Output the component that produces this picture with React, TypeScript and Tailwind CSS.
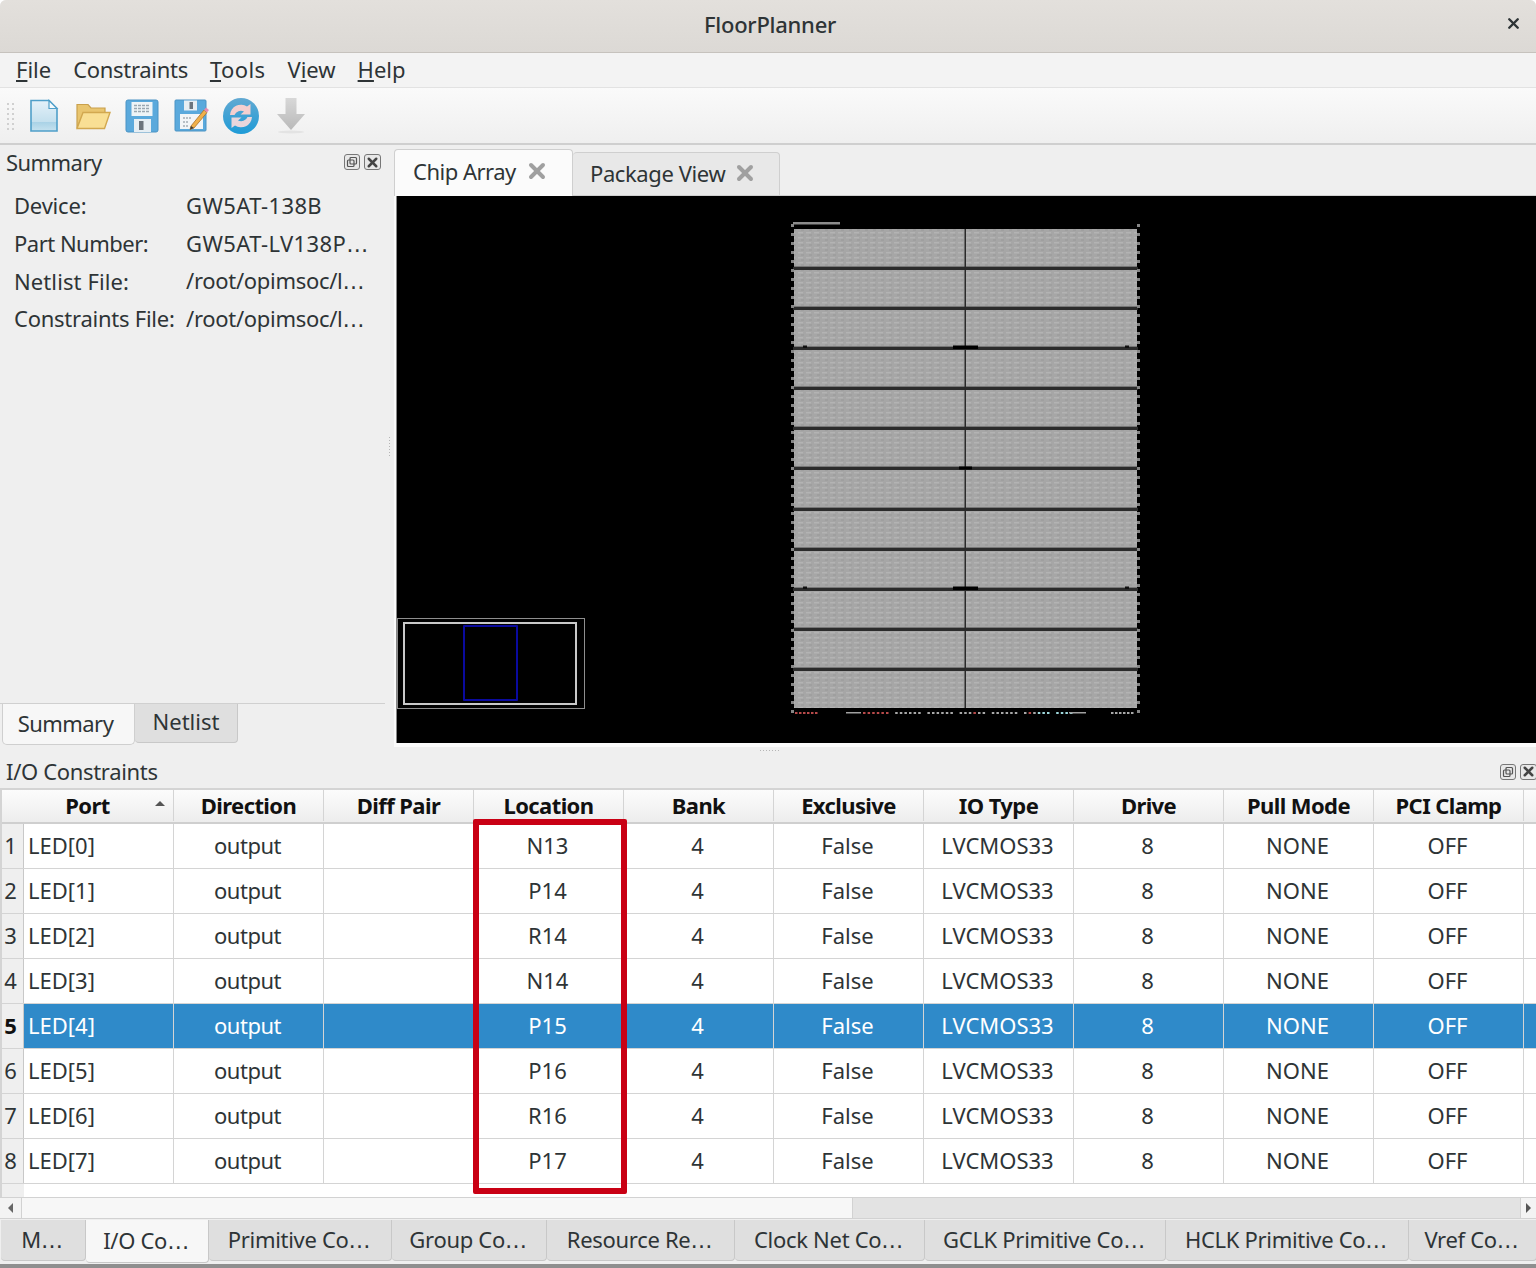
import React from 'react';
import { X } from 'lucide-react';

const font = 'font-["Noto_Sans",sans-serif]';

const columns = ['Direction', 'Diff Pair', 'Location', 'Bank', 'Exclusive', 'IO Type', 'Drive', 'Pull Mode', 'PCI Clamp'];

const rows = [
  { port: 'LED[0]', loc: 'N13' },
  { port: 'LED[1]', loc: 'P14' },
  { port: 'LED[2]', loc: 'R14' },
  { port: 'LED[3]', loc: 'N14' },
  { port: 'LED[4]', loc: 'P15' },
  { port: 'LED[5]', loc: 'P16' },
  { port: 'LED[6]', loc: 'R16' },
  { port: 'LED[7]', loc: 'P17' },
];

const bottomTabs = [
  { label: 'M', w: 'w-[85px]' },
  { label: 'I/O Co', w: 'w-[123px]', active: true },
  { label: 'Primitive Co', w: 'w-[183px]' },
  { label: 'Group Co', w: 'w-[155px]' },
  { label: 'Resource Re', w: 'w-[188px]' },
  { label: 'Clock Net Co', w: 'w-[190px]' },
  { label: 'GCLK Primitive Co', w: 'w-[241px]' },
  { label: 'HCLK Primitive Co', w: 'w-[243px]' },
  { label: 'Vref Co', w: 'w-[128px]' },
];

const summary = [
  { k: 'Device:', kt: 'tracking-[-0.2px]', v: 'GW5AT-138B', cut: false, tr: 'tracking-[0.4px]' },
  { k: 'Part Number:', kt: 'tracking-[-0.5px]', v: 'GW5AT-LV138P', cut: true, tr: 'tracking-[0.4px]' },
  { k: 'Netlist File:', kt: 'tracking-[0.1px]', v: '/root/opimsoc/l', cut: true, tr: 'tracking-[-0.3px]' },
  { k: 'Constraints File:', kt: 'tracking-[-0.25px]', v: '/root/opimsoc/l', cut: true, tr: 'tracking-[-0.3px]' },
];

// the reference's ellipsis is wider than the Noto one
function Dots() {
  return <span className='font-["DejaVu_Sans",sans-serif]'>…</span>;
}

function NewIcon() {
  return (
    <svg width="30" height="34" viewBox="0 0 30 34">
      <defs>
        <linearGradient id="nf" x1="0" y1="0" x2="0" y2="1">
          <stop offset="0" stopColor="#e4f1f9" />
          <stop offset="0.7" stopColor="#c4e0ee" />
          <stop offset="0.71" stopColor="#a9d2e6" />
          <stop offset="1" stopColor="#c6e2ef" />
        </linearGradient>
      </defs>
      <path d="M2 1.5H20L28 9.5V32H2Z" fill="url(#nf)" stroke="#4f9fc9" strokeWidth="1.6" />
      <path d="M20 1.5V9.5H28Z" fill="#f4fafd" stroke="#4f9fc9" strokeWidth="1.2" />
    </svg>
  );
}

function OpenIcon() {
  return (
    <svg width="36" height="30" viewBox="0 0 36 30">
      <path d="M2 27V3.5H13L16 7H30V13H8Z" fill="#e9c56f" stroke="#c9a04c" strokeWidth="1.2" />
      <path d="M2 27.5L8 11.5H35L29.5 27.5Z" fill="#f9df94" stroke="#d2a850" strokeWidth="1.4" />
    </svg>
  );
}

function SaveIcon() {
  return (
    <svg width="34" height="34" viewBox="0 0 34 34">
      <rect x="1" y="1" width="32" height="32" rx="2" fill="#5aa9dc" stroke="#4a93c4" />
      <rect x="6.5" y="3" width="21" height="14" fill="#eef4f7" />
      <path d="M9 6.5H25M9 9.5H25M9 12.5H25" stroke="#9aa7b1" strokeWidth="1.3" strokeDasharray="3 1" />
      <rect x="9" y="20" width="17" height="13" fill="#e6eef3" />
      <rect x="14" y="22" width="4.5" height="9" fill="#6a747d" />
    </svg>
  );
}

function SaveAsIcon() {
  return (
    <svg width="36" height="34" viewBox="0 0 36 34">
      <rect x="1" y="1" width="31" height="31" rx="1" fill="#5aa9dc" stroke="#4a93c4" />
      <rect x="10" y="1.5" width="13" height="10" fill="#e6eef3" />
      <rect x="15.5" y="3" width="3.5" height="7" fill="#6a747d" />
      <rect x="6" y="15" width="23" height="15" fill="#f2f5f7" />
      <path d="M9 19H17M9 23H15M9 27H14" stroke="#7d8a94" strokeWidth="1.2" strokeDasharray="2 1" />
      <path d="M17 27L30 11L33 13.5L20 29L16 30.5Z" fill="#f0b04a" stroke="#a9712a" strokeWidth="0.8" />
      <path d="M30 11L32 8.5L35 11L33 13.5Z" fill="#e88bb0" />
      <path d="M16 30.5L17 27L20 29Z" fill="#3d3d3d" />
    </svg>
  );
}

function RefreshIcon() {
  return (
    <svg width="38" height="38" viewBox="0 0 38 38">
      <defs>
        <linearGradient id="rf" x1="0" y1="0" x2="0" y2="1">
          <stop offset="0" stopColor="#62a9d2" />
          <stop offset="1" stopColor="#1e9bd7" />
        </linearGradient>
      </defs>
      <circle cx="19" cy="19" r="18" fill="url(#rf)" />
      <path d="M8 18A11 11 0 0 1 25 9.5L28.5 7V17.5H18.5L22 14.5A6.8 6.8 0 0 0 12.5 18Z" fill="#f4cfcf" />
      <path d="M30 20A11 11 0 0 1 13 28.5L9.5 31V20.5H19.5L16 23.5A6.8 6.8 0 0 0 25.5 20Z" fill="#e9d6dc" />
    </svg>
  );
}

function DownIcon() {
  return (
    <svg width="30" height="38" viewBox="0 0 30 38">
      <defs>
        <linearGradient id="df" x1="0" y1="0" x2="0" y2="1">
          <stop offset="0" stopColor="#d8d8d8" />
          <stop offset="1" stopColor="#b9b9b9" />
        </linearGradient>
      </defs>
      <path d="M9.5 1H20.5V17H29L15 33L1 17H9.5Z" fill="url(#df)" />
      <ellipse cx="15" cy="35" rx="13" ry="1.5" fill="#e3e3e3" />
    </svg>
  );
}

function FloatButtons() {
  return (
    <div className="flex items-center gap-[4px]">
      <span className="flex h-[16px] w-[16px] items-center justify-center rounded-[3px] border border-[#777] bg-[#e8e8e8]">
        <svg width="12" height="12" viewBox="0 0 12 12" fill="none" stroke="#555" strokeWidth="1.2">
          <rect x="4" y="1.5" width="6.5" height="6.5" rx="1" />
          <rect x="1.5" y="4" width="6.5" height="6.5" rx="1" />
        </svg>
      </span>
      <span className="flex h-[16px] w-[17px] items-center justify-center rounded-[3px] border border-[#777] bg-[#e8e8e8]">
        <X size={15} strokeWidth={4} className="text-[#444]" />
      </span>
    </div>
  );
}

function Grip({ vertical }: { vertical?: boolean }) {
  return (
    <div className={vertical ? 'grid grid-cols-1 gap-[2px]' : 'flex gap-[2px]'}>
      {[0, 1, 2, 3, 4, 5, 6].map((i) => (
        <span key={i} className="h-[1px] w-[1px] bg-[#b5b5b5]" />
      ))}
    </div>
  );
}

function ChipDrawing() {
  const bandY = [72.5, 112.5, 152.5, 192.5, 232.5, 272.5, 313.5, 353.5, 393.5, 433.5, 473.5];
  const ioY = Array.from({ length: 55 }, (_, i) => 28 + i * 9);
  const bottomIo = Array.from({ length: 46 }, (_, i) => 466 + i * 4.6);
  return (
    <svg className="block h-full w-full" viewBox="0 0 1139 547">
      <defs>
        <pattern id="fabric" width="8" height="5" patternUnits="userSpaceOnUse">
          <rect width="8" height="5" fill="#a6a6a6" />
          <rect x="1" y="1" width="5" height="1.5" fill="#b3b3b3" />
          <rect x="4" y="3.5" width="3" height="1" fill="#999" />
        </pattern>
      </defs>
      <rect x="397" y="33" width="343" height="479" fill="url(#fabric)" />
      <rect x="396" y="26" width="47" height="2.5" fill="#8c8c8c" />
      {bandY.map((y) => (
        <g key={y}>
          <rect x="396" y={y - 1.5} width="345" height="3" fill="#2b2b2b" />
          <rect x="397" y={y - 2.5} width="343" height="1" fill="#777" />
        </g>
      ))}
      <rect x="567.5" y="33" width="1.5" height="479" fill="#2a2a2a" />
      <rect x="556" y="149.5" width="25" height="3.5" fill="#000" />
      <rect x="562" y="270.5" width="13" height="3" fill="#000" />
      <rect x="556" y="390.5" width="25" height="3.5" fill="#000" />
      {[149.5, 390.5].map((y) => (
        <g key={y}>
          <rect x="406" y={y} width="4" height="2.5" fill="#111" />
          <rect x="728" y={y} width="4" height="2.5" fill="#111" />
        </g>
      ))}
      {ioY.map((y) => (
        <g key={y}>
          <rect x="394" y={y} width="3" height="3" fill="#858585" />
          <rect x="740" y={y} width="3" height="3" fill="#858585" />
        </g>
      ))}
      {[0, 4, 8, 12, 16, 20].map((x) => (
        <rect key={x} x={398 + x} y="516" width="2.5" height="2" fill="#b84a4a" />
      ))}
      <rect x="449" y="516" width="15" height="1.5" fill="#a0a0a0" />
      {bottomIo.map((x, i) =>
        i % 7 === 6 ? null : (
          <rect key={x} x={x} y="516" width="2.5" height="2" fill={i < 7 || i === 24 || i === 36 ? '#b84a4a' : i > 37 ? '#9ed8dc' : '#a8a8a8'} />
        ),
      )}
      <rect x="672" y="516" width="17" height="1.5" fill="#a0a0a0" />
      {[0, 4, 8, 12, 16, 20].map((x) => (
        <rect key={x} x={714 + x} y="516" width="2.5" height="2" fill="#a8a8a8" />
      ))}
    </svg>
  );
}

export default function App() {
  return (
    <div className={`relative flex h-[1268px] w-[1536px] flex-col overflow-hidden rounded-t-[6px] bg-[#efefef] text-[22px] text-[#2e3436] ${font}`}>
      {/* title bar */}
      <div className="relative flex h-[53px] shrink-0 items-center justify-center border-b border-[#c6c2bd] bg-gradient-to-b from-[#e3e0dc] to-[#dcd9d5] pb-[4px]">
        <div className="pl-[4px] font-medium tracking-[-0.25px] text-[#2e3436]">FloorPlanner</div>
        <X size={17} strokeWidth={3.4} className="absolute right-[14px] top-[15px] text-[#2e3436]" />
      </div>

      {/* menu */}
      <div className="flex h-[35px] shrink-0 items-center gap-[22px] border-b border-[#e2e2e2] bg-[#f3f3f3] pb-[2px] pl-[16px] leading-none">
        <span><u>F</u>ile</span>
        <span className="tracking-[-0.3px]">Constraints</span>
        <span className="tracking-[0.4px]"><u>T</u>ools</span>
        <span>V<u>i</u>ew</span>
        <span><u>H</u>elp</span>
      </div>

      {/* toolbar */}
      <div className="flex h-[57px] shrink-0 items-center border-b-2 border-[#cfcfcf] bg-gradient-to-b from-[#fafafa] to-[#efefef] pl-[7px] pt-[1px]">
        <div className="mr-[15px] grid grid-cols-2 gap-x-[3px] gap-y-[3px]">
          {[0, 1, 2, 3, 4, 5, 6, 7, 8, 9, 10, 11].map((i) => (
            <span key={i} className="h-[2px] w-[2px] bg-[#d0d0d0]" />
          ))}
        </div>
        <div className="flex items-center">
          <div className="w-[46px]"><NewIcon /></div>
          <div className="w-[50px]"><OpenIcon /></div>
          <div className="w-[49px]"><SaveIcon /></div>
          <div className="w-[48px]"><SaveAsIcon /></div>
          <div className="w-[54px]"><RefreshIcon /></div>
          <DownIcon />
        </div>
      </div>

      {/* upper area */}
      <div className="flex h-[602px] shrink-0">
        <div className="flex w-[394px] shrink-0">
          <div className="flex w-[385px] flex-col pb-[2px]">
            <div className="flex h-[36px] items-center justify-between pb-[2px] pl-[6px] pr-[4px]">
              <span className="tracking-[-0.55px]">Summary</span>
              <FloatButtons />
            </div>
            <div className="flex-1 pl-[14px] pt-[6px]">
              {summary.map((s) => (
                <div key={s.k} className="flex h-[37.7px] items-center">
                  <span className={`w-[172px] shrink-0 ${s.kt}`}>{s.k}</span>
                  <span className={`whitespace-nowrap ${s.tr}`}>
                    {s.v}
                    {s.cut && <Dots />}
                  </span>
                </div>
              ))}
            </div>
            <div className="flex h-[42px] items-start border-t border-[#d0d0d0]">
              <div className="ml-[2px] flex h-[41px] w-[133px] items-center justify-center rounded-b-[5px] border border-t-0 border-[#cfcfcf] bg-[#f7f7f7] pb-[2px] pr-[6px] tracking-[-0.55px]">Summary</div>
              <div className="flex h-[39px] w-[103px] items-center justify-center rounded-b-[4px] border border-l-0 border-t-0 border-[#c8c8c8] bg-[#dfdfdf] pb-[3px]">Netlist</div>
            </div>
          </div>
          <div className="flex flex-1 items-center justify-center">
            <Grip vertical />
          </div>
        </div>

        <div className="flex min-w-0 flex-1 flex-col pt-[3px]">
          <div className="flex h-[48px] shrink-0 items-end">
            <div className="flex h-[47px] w-[179px] items-center gap-[9px] rounded-t-[4px] border border-b-0 border-[#cfcfcf] bg-[#fbfbfb] pb-[4px] pl-[18px]">
              <span className="tracking-[-0.5px]">Chip Array</span>
              <X size={24} strokeWidth={4} className="text-[#a0a0a0]" />
            </div>
            <div className="flex h-[44px] w-[207px] items-center gap-[8px] rounded-t-[4px] border border-l-0 border-[#cfcfcf] bg-[#e8e8e8] pb-[2px] pl-[17px]">
              <span className="tracking-[-0.4px]">Package View</span>
              <X size={24} strokeWidth={4} className="text-[#a0a0a0]" />
            </div>
            <div className="h-[1px] flex-1 bg-[#cfcfcf]" />
          </div>
          <div className="flex-1 bg-[#fbfbfb] pb-[2px] pl-[2px]">
            <div className="relative h-[547px] border-l border-[#888] bg-black">
              <ChipDrawing />
              <div className="absolute left-[0px] top-[422px] h-[91px] w-[188px] border border-[#8e8e8e]">
                <div className="absolute left-[5px] top-[3px] h-[83px] w-[174px] border-2 border-[#c9c9c9]">
                  <div className="absolute left-[58px] top-[1px] h-[76px] w-[55px] rounded-[1px] border-2 border-[#0a0a9e]" />
                </div>
              </div>
            </div>
          </div>
        </div>
      </div>

      {/* I/O constraints panel */}
      <div className="relative flex min-h-0 flex-1 flex-col">
        <div className="absolute left-[760px] top-[3px]">
          <Grip />
        </div>
        <div className="flex h-[41px] shrink-0 items-center justify-between pl-[6px] pt-[8px]">
          <span className="tracking-[-0.33px]">I/O Constraints</span>
          <div className="-mr-[1px]"><FloatButtons /></div>
        </div>

        <div className="relative flex h-[409px] shrink-0 flex-col border-l-2 border-t-2 border-[#d4d4d4] bg-white">
          <div className="flex h-[34px] shrink-0 border-b-2 border-[#cfcfcf] bg-gradient-to-b from-[#fcfcfc] to-[#ededed] pb-[1px] font-bold tracking-[-0.6px] text-[#111]">
            <div className="relative flex w-[172px] shrink-0 items-center justify-center border-r border-[#d4d4d4]">
              Port
              <span className="absolute right-[8px] top-[11px] h-0 w-0 border-x-[5px] border-b-[5px] border-x-transparent border-b-[#555]" />
            </div>
            {columns.map((c) => (
              <div key={c} className="flex w-[150px] shrink-0 items-center justify-center border-r border-[#d4d4d4]">
                {c}
              </div>
            ))}
            <div className="flex-1" />
          </div>

          {rows.map((r, i) => {
            const sel = i === 4;
            const cell = 'flex w-[150px] shrink-0 items-center justify-center border-r border-[#d4d4d4] pb-[2px] pr-[2px]';
            return (
              <div key={r.port} className={`flex h-[45px] shrink-0 border-b border-[#d4d4d4] ${sel ? 'bg-[#2f8ac9] text-white' : ''}`}>
                <div className={`flex w-[22px] shrink-0 items-center justify-center border-r border-[#c8c8c8] bg-[#efefef] pb-[2px] pr-[4px] ${sel ? 'font-bold text-[#111]' : 'text-[#2e3436]'}`}>
                  {i + 1}
                </div>
                <div className="flex w-[150px] shrink-0 items-center border-r border-[#d4d4d4] pb-[2px] pl-[4px]">{r.port}</div>
                <div className={cell}><span className="tracking-[-0.5px]">output</span></div>
                <div className={cell} />
                <div className={cell}>{r.loc}</div>
                <div className={cell}>4</div>
                <div className={cell}>False</div>
                <div className={cell}>LVCMOS33</div>
                <div className={cell}>8</div>
                <div className={cell}>NONE</div>
                <div className={cell}>OFF</div>
                <div className="flex-1" />
              </div>
            );
          })}

          <div className="flex min-h-0 flex-1">
            <div className="w-[22px] bg-[#efefef]" />
          </div>

          {/* highlight drawn over the table */}
          <div className="absolute left-[471px] top-[29px] h-[375px] w-[154px] rounded-[2px] border-[6px] border-[#c90014]" />
        </div>

        {/* scrollbar */}
        <div className="flex h-[22px] shrink-0 border-y border-[#d2d2d2] bg-[#e3e3e3]">
          <div className="flex w-[22px] shrink-0 items-center justify-center border-r border-[#d2d2d2] bg-[#f3f3f3]">
            <span className="h-0 w-0 border-y-[5px] border-r-[5px] border-y-transparent border-r-[#666]" />
          </div>
          <div className="w-[831px] shrink-0 border-r border-[#d2d2d2] bg-[#f7f7f7]" />
          <div className="flex-1" />
          <div className="flex w-[16px] shrink-0 items-center justify-center border-l border-[#d2d2d2] bg-[#f3f3f3]">
            <span className="h-0 w-0 border-y-[5px] border-l-[5px] border-y-transparent border-l-[#555]" />
          </div>
        </div>

        {/* bottom tabs */}
        <div className="flex h-[45px] shrink-0 items-start pl-[1px] pt-[1px]">
          {bottomTabs.map((t) => (
            <div
              key={t.label}
              className={`flex shrink-0 items-center justify-center whitespace-nowrap rounded-b-[4px] border-b border-r border-[#c8c8c8] pr-[2px] tracking-[-0.3px] ${t.w} ${t.active ? 'h-[43px] bg-[#f7f7f7]' : 'h-[41px] bg-[#dfdfdf]'}`}
            >
              <span>{t.label}<Dots /></span>
            </div>
          ))}
        </div>
      </div>
      <div className="absolute bottom-0 left-0 h-[4px] w-full bg-[#8f8f8f]" />
    </div>
  );
}
